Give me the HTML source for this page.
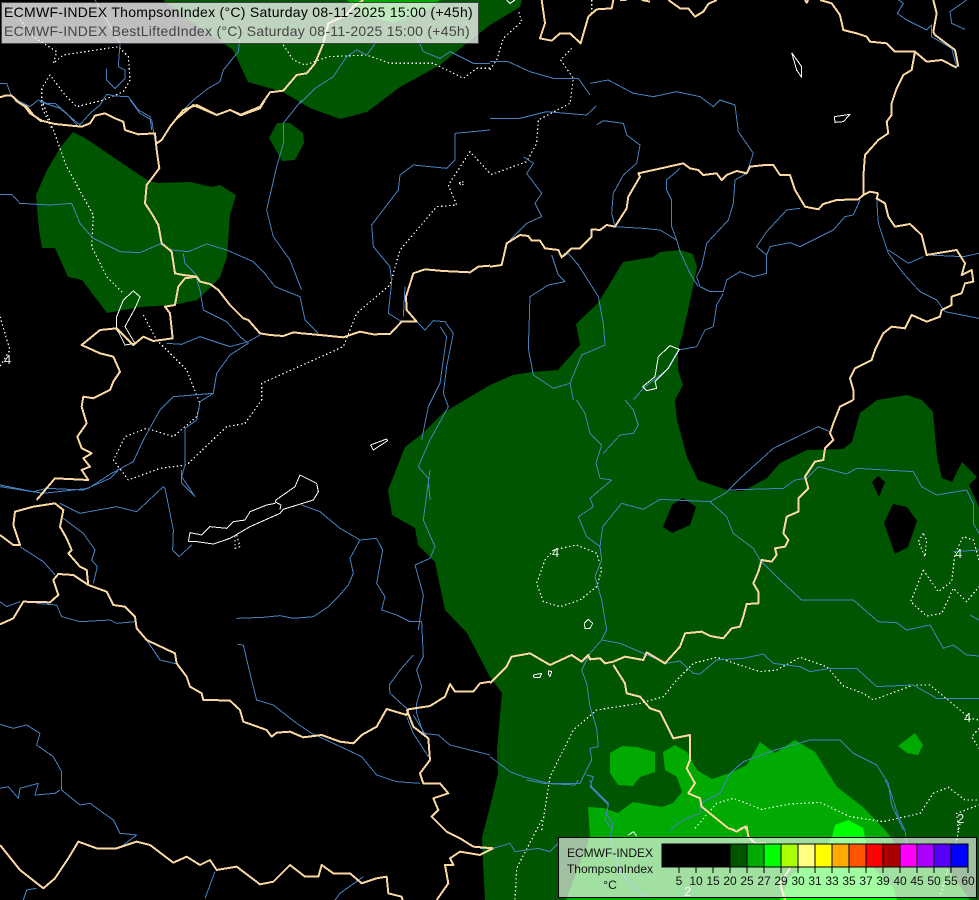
<!DOCTYPE html>
<html><head><meta charset="utf-8"><title>ECMWF-INDEX</title>
<style>
html,body{margin:0;padding:0;background:#000;width:979px;height:900px;overflow:hidden}
body{position:relative;font-family:"Liberation Sans",sans-serif}
svg{position:absolute;left:0;top:0}
polyline,.nss{vector-effect:non-scaling-stroke;fill:none;stroke-linejoin:round;shape-rendering:crispEdges}
.r polyline{stroke:#4682c0;stroke-width:1}
.b polyline{stroke:#fbd8a2;stroke-width:2}
.d polyline{stroke:#fff;stroke-width:1.2;stroke-dasharray:1.5 2.5}
.l polyline{stroke:#fff;stroke-width:1}
.h{position:absolute;left:4px;font-size:14px;letter-spacing:.28px;white-space:nowrap}
.t{position:absolute;white-space:nowrap;font-size:12px;color:#111;transform:translateX(-50%)}
</style></head><body>
<svg width="979" height="900" viewBox="0 0 979 900">
<g fill="#005500">
<polygon points="163,0 193,23 233,50 248,82 283,92 310,108 340,119 367,112 400,87 440,65 467,43 490,25 520,7 522,0"/>
<polygon points="73,132 85,138 113,157 147,180 157,183 190,182 212,187 220,185 236,195 230,215 227,257 220,277 210,288 197,300 173,305 140,307 107,313 82,280 68,277 55,248 42,248 39,230 36,195 47,170 60,148"/>
<polygon points="277,123 290,123 303,133 304,143 295,160 282,161 269,138"/>
<polygon points="680,250 693,254 697,267 693,287 683,333 678,350 678,370 683,385 675,400 677,420 687,457 698,480 730,491 743,491 767,478 780,463 807,450 843,449 852,442 860,413 877,400 907,395 922,400 933,412 937,457 942,478 952,482 962,462 977,477 969,485 979,507 979,900 485,900 483,863 482,837 490,807 498,773 497,750 502,693 490,677 467,633 445,610 435,562 418,545 415,528 392,515 388,490 405,447 423,433 443,413 490,385 513,375 532,372 558,370 580,345 576,324 598,303 623,262 653,257 660,252"/>
</g>
<g fill="#000">
<polygon points="663,527 672,505 683,498 696,507 690,525 672,533"/>
<polygon points="872,482 878,476 885,482 879,497"/>
<polygon points="884,523 893,504 907,507 917,521 908,547 895,554"/>
</g>
<g fill="#00aa00">
<polygon points="347,0 367,17 393,22 423,13 440,0"/>
<polygon points="610,753 622,746 637,747 655,752 655,772 640,777 633,786 618,785 610,773"/>
<polygon points="663,752 675,745 687,752 697,770 712,779 730,773 747,765 760,742 775,753 795,740 815,752 837,787 863,807 885,830 893,840 900,862 947,867 970,900 566,900 590,837 588,807 603,808 618,813 633,802 662,807 673,803 682,792 677,777 665,770"/>
<polygon points="898,746 915,733 923,745 918,755 907,753"/>
</g>
<polygon fill="#00ff00" points="832,837 835,825 848,820 863,828 865,837 870,865 893,887 897,900 780,900 790,877 800,868 813,863"/>

<!-- dotted contours -->
<g class="d">
<g transform="scale(.33333)">
<polyline points="30,20 100,110 170,155 160,190 190,165 355,140 385,170 390,240 370,275 310,300 230,320 195,285 150,225 125,265 125,320 155,385"/>
<polyline points="850,135 880,180 915,195 985,170 1100,165 1170,190 1300,190 1390,235 1430,205 1470,205"/>
</g>
<g transform="translate(0,100) scale(.33333)">
<polyline points="125,0 160,90 200,200 280,345 275,440 320,530 370,580"/>
<polyline points="430,645 470,720 560,810 600,910 590,950 520,1010 440,985 375,1010 340,1080 385,1140 480,1105 560,1095 680,980 735,970 785,900 785,850 1030,740 1070,640 1170,555 1200,450 1310,320 1370,315 1345,255 1410,155 1470,220"/>
<polyline points="1378,250 1385,243 1393,250 1385,257 1378,250"/>
<polyline points="0,650 30,750 0,800"/>
</g>
<g transform="translate(490,0) scale(.33333)">
<polyline points="0,210 20,180 40,115 95,65 85,30"/>
<polyline points="305,0 305,40"/>
<polyline points="245,145 212,180 250,235 240,310 145,360 140,430 110,485 0,525"/>
</g>
<g transform="translate(0,470) scale(.33333)">
<polyline points="710,195 720,230 705,235 705,200 710,195"/>
</g>
<g transform="translate(490,400) scale(.33333)">
<polyline points="190,450 260,435 320,460 335,510 320,560 270,600 210,620 160,605 140,550 165,480 190,450"/>
<polyline points="155,1290 180,1130 250,990 320,930 450,910 520,890 560,840 610,790 680,772 810,815 860,810 930,772 1010,800 1060,858 1120,880 1150,900 1270,855 1320,855 1440,955 1467,960"/>
<polyline points="1467,985 1445,1010 1467,1045"/>
<polyline points="615,1285 680,1210 730,1195 815,1228 900,1212 990,1207 1080,1250 1180,1265 1290,1240 1330,1180 1375,1162 1425,1200 1467,1200"/>
<polyline points="1405,1290 1400,1240 1467,1215"/>
<polyline points="1300,400 1285,425 1305,470 1310,420 1300,400"/>
<polyline points="1300,510 1262,605 1310,648 1355,640 1390,565 1430,605 1467,560"/>
<polyline points="1300,510 1345,575 1385,545 1395,460 1420,410 1450,420 1467,480"/>
</g>
<g transform="translate(480,780) scale(.33333)">
<polyline points="185,120 110,265 105,360"/>
</g>
<g transform="translate(730,780) scale(.33333)">
<polyline points="690,130 680,180 630,350"/>
</g>
</g>

<!-- rivers -->
<g class="r">
<g transform="scale(.33333)">
<polyline points="0,250 20,250 35,290 60,305 90,320 115,300 140,310 165,310 200,340 235,380 270,340 300,315 320,283 345,288 385,290 415,330 450,350 455,390"/>
<polyline points="320,205 320,240 345,265 375,235 375,210 355,200 360,130 285,0"/>
<polyline points="720,100 715,155 670,210 660,245 625,265 580,300 530,350"/>
<polyline points="900,310 945,265 1000,230 1040,170 1070,150 1100,165 1130,125"/>
<polyline points="1250,110 1270,155 1320,175 1350,155 1380,170 1420,190 1470,190"/>
</g>
<g transform="translate(0,100) scale(.33333)">
<polyline points="0,283 35,283 60,310 150,315 215,310 240,370 280,415 360,455 420,458 480,432 515,450 565,455 620,432 680,450 760,485 790,515 825,560 900,590 915,660 955,700"/>
<polyline points="550,460 555,490 585,520 600,570 610,630 680,665 720,710 745,730 690,765 650,820 640,880 600,905 590,960 555,985 555,1095 545,1130 585,1190"/>
<polyline points="640,880 520,890 480,930 430,1020 400,1085 335,1120 265,1165 130,1180 0,1160"/>
<polyline points="780,705 745,725 690,740 600,710 545,733 500,730"/>
<polyline points="905,0 850,70 850,130 830,200 800,330 820,410 870,480 905,570"/>
<polyline points="390,0 420,40 455,60 470,150"/>
<polyline points="120,5 180,25 240,75"/>
<polyline points="1470,90 1365,100 1365,180 1340,205 1240,195 1200,225 1195,270 1115,375 1120,440 1170,500 1175,545 1165,640 1205,665 1250,665 1275,690 1300,662 1335,665 1360,700 1340,800 1330,880 1345,920 1290,1020 1255,1100 1285,1135 1290,1200"/>
<polyline points="1215,560 1210,650"/>
<polyline points="1320,680 1340,710 1320,850 1285,920 1265,1020"/>
</g>
<g transform="translate(490,0) scale(.33333)">
<polyline points="0,185 55,185 120,215 190,235 265,235 300,285"/>
<polyline points="300,250 355,240 430,280 490,290 560,275 630,290 670,320 690,300 735,315 745,395 790,460 770,520 735,540 730,610 715,660 650,730 635,800 620,830 630,860 660,875 700,875 710,840 750,815 790,830 830,820 830,765 800,740 830,695 890,630 930,625"/>
<polyline points="0,355 90,355 170,335 290,345 318,318"/>
<polyline points="320,375 340,362 400,370 410,405 450,435 440,490 400,525 370,580 365,640 375,680 460,685 510,690 560,720 570,755 600,820 625,860"/>
<polyline points="100,470 130,490 110,520 155,580 135,610 155,650 110,670 60,720"/>
<polyline points="570,505 530,540 530,570 545,600 545,680 560,720"/>
<polyline points="830,765 840,740 900,728 930,740 1030,690 1065,650 1090,645 1110,600"/>
<polyline points="1160,595 1165,670 1195,760 1240,820 1290,875 1340,900 1365,935 1467,955"/>
<polyline points="1195,750 1255,790 1300,770"/>
<polyline points="1310,765 1420,770 1467,760"/>
<polyline points="1225,0 1240,10 1222,40 1250,60 1310,90 1325,75 1325,110 1385,145 1400,200"/>
<polyline points="1430,0 1380,35 1385,70 1425,88"/>
<polyline points="185,765 205,825 225,845 175,855 120,890 115,1045 130,1125 190,1165 240,1150 275,1065 345,1035 340,970 325,890 265,795 235,760 215,772"/>
<polyline points="240,1150 250,1200"/>
<polyline points="430,1200 460,1165 530,1110 565,1050 620,1040 645,990 670,980 680,915 700,880"/>
</g>
<g transform="translate(490,400) scale(.33333)">
<polyline points="260,0 285,40 300,100 335,135 318,190 330,235 365,240 300,295 310,320 265,350 290,410 330,440 335,480 315,530 335,600 350,690 335,720 300,760 275,810 290,850 300,920 320,985 325,1040 300,1045 305,1080 270,1150 175,1150 100,1130 60,1115 0,1070"/>
<polyline points="405,0 430,30 445,75 430,100 390,105 340,160"/>
<polyline points="335,720 390,730 530,790 570,783 610,820 630,822 680,780 760,775 820,762 850,790 930,800 960,815 1020,805 1100,805 1160,860 1270,855 1340,895 1467,895"/>
<polyline points="330,440 338,380 395,310 460,328 510,298 660,305 705,280 745,240 850,145 985,80 1020,95"/>
<polyline points="660,305 710,350 730,400 790,445 810,480 870,540 935,600 1090,600 1165,665 1220,668 1250,690 1320,675 1360,745 1390,735 1430,765 1467,768"/>
<polyline points="715,270 880,265 915,240 950,235 985,200 1070,222 1100,205 1270,215 1295,260 1340,285 1430,270 1450,310 1450,370 1467,400"/>
<polyline points="1390,455 1467,450"/>
<polyline points="1440,645 1467,660"/>
<polyline points="855,1050 960,1020 1050,1020 1090,1060 1160,1095 1195,1150 1205,1215 1240,1290"/>
<polyline points="855,1050 800,1070 760,1085 720,1120 690,1180 630,1210 630,1240 580,1260 540,1290"/>
<polyline points="290,1125 310,1130 300,1160 355,1215 345,1260 370,1290"/>
</g>
<g transform="translate(0,470) scale(.33333)">
<polyline points="0,45 100,65 140,55 250,60 330,25 355,0"/>
<polyline points="180,100 240,130 350,110 410,125 490,50 495,55 520,180 518,240 537,260 575,225"/>
<polyline points="545,0 545,40 585,80"/>
<polyline points="905,105 960,125 1020,175 1080,210 1130,205 1148,240 1130,340 1155,380 1145,420 1190,435 1230,455 1265,455 1270,560 1250,600 1265,650 1250,700 1250,730 1270,790 1315,795 1350,825 1470,855"/>
<polyline points="1080,210 1050,265 1060,310 1045,345 1015,380 985,410 940,440 880,445 840,437 790,442 710,445"/>
<polyline points="712,523 730,525 750,610 770,690 820,705 890,760 935,790 1000,820 1085,860 1130,915 1190,935 1260,940"/>
<polyline points="1290,0 1270,150 1305,230 1290,265 1245,285 1270,375 1255,480"/>
<polyline points="1240,555 1200,600 1168,645 1170,670 1225,720"/>
<polyline points="190,145 250,190 285,240 275,270 292,290 280,340"/>
<polyline points="0,395 20,410 60,395"/>
<polyline points="110,400 170,405 185,440 240,455 330,450 350,460 405,455"/>
<polyline points="60,230 130,275 165,315"/>
<polyline points="440,510 480,570 530,582"/>
<polyline points="0,763 40,775 80,765 120,790 110,825 160,860 185,905 185,960 240,1005 270,1000 340,1050 360,1090 410,1095 370,1125"/>
<polyline points="0,955 25,950 55,985 60,955 115,940 105,975 165,970 180,960"/>
<polyline points="645,1205 615,1285"/>
<polyline points="1090,1220 1020,1270 1005,1290"/>
<polyline points="70,1290 80,1260 110,1255"/>
<polyline points="1220,740 1240,790 1285,860"/>
<polyline points="1240,735 1280,800"/>
</g>
<g transform="translate(480,780) scale(.33333)">
<polyline points="140,0 190,10 285,15 295,0"/>
<polyline points="330,0 335,20 385,70 380,105 400,130 390,170 420,270 440,300 480,340 510,350"/>
<polyline points="0,205 40,205 90,190 105,215 175,205 210,215 235,190"/>
</g>
<g transform="translate(730,780) scale(.33333)">
<polyline points="465,0 480,30 505,110 525,150 530,190"/>
</g>
</g>

<!-- lakes -->
<g class="l">
<g transform="translate(0,470) scale(.33333)">
<polyline points="565,215 570,188 605,195 630,170 680,175 700,155 735,150 750,125 800,105 825,100 828,90 885,50 900,15 950,40 955,65 940,90 850,118 840,130 750,170 690,205 640,222 590,215 565,215"/>
<polyline points="825,95 843,105 840,118"/>
</g>
<g transform="translate(0,100) scale(.33333)">
<polyline points="1112,1035 1160,1017 1163,1022 1120,1050 1112,1035"/>
<polyline points="350,690 350,650 370,600 400,573 420,590 405,625 375,680 405,730 375,735 355,695 350,690"/>
</g>
<g transform="translate(490,0) scale(.33333)">
<polyline points="905,158 935,200 935,232 920,210 905,158"/>
<polyline points="1033,350 1080,343 1060,365 1035,367 1033,350"/>
<polyline points="540,1037 568,1048 535,1105 495,1145 500,1165 470,1172 458,1160 495,1130 505,1070 540,1037"/>
<polyline points="50,0 60,10 75,0"/>
</g>
<g transform="translate(490,400) scale(.33333)">
<polyline points="283,670 295,658 308,670 300,685 285,685 283,670"/>
<polyline points="130,825 155,820 150,832 132,832 130,825"/>
<polyline points="175,812 185,815 180,830 175,822 175,812"/>
</g>
<g transform="translate(480,780) scale(.33333)">
<polyline points="445,165 460,155 470,168"/>
</g>
</g>

<!-- borders -->
<g class="b">
<g transform="scale(.33333)">
<polyline points="0,292 15,287 35,287 60,310 80,320 100,345 125,365"/>
<polyline points="525,360 580,315 650,345 690,330 720,345 780,320 810,277 850,272 890,225 920,220 945,190 970,130 985,70 1040,45 1060,20 1090,0"/>
</g>
<g transform="translate(0,100) scale(.33333)">
<polyline points="45,0 75,20 90,40 125,62 165,72 245,80 270,70 285,47 315,40 345,55 370,65 375,90 415,103 465,100 470,150 478,205 440,255 435,310 458,345 475,375 485,430 515,455 525,520 550,525 590,530 600,545 630,552 655,570 690,615 730,655 745,660 780,700 810,705 850,708 880,697 905,700 960,705 1030,712 1080,695 1120,703 1170,702 1205,665 1250,665 1220,630 1218,590 1240,520 1275,508 1330,513 1410,517 1435,500 1470,497"/>
<polyline points="470,130 485,120 510,80 550,30 590,15 650,45 690,30 725,45 780,25 795,0"/>
<polyline points="110,1200 165,1135 265,1140 245,1110 270,1100 250,1075 275,1060 245,1045 232,1010 260,970 245,920 250,890 280,895 330,870 340,845 360,815 340,770 300,760 245,735 300,690 350,685 400,735 430,710 460,723 518,715 510,640 495,620 525,615 535,560 555,535 590,530"/>
</g>
<g transform="translate(490,0) scale(.33333)">
<polyline points="155,0 165,70 150,115 185,122 210,100 240,100 272,130 295,50 320,28 365,25 370,0"/>
<polyline points="390,0 410,0"/>
<polyline points="455,0 480,5"/>
<polyline points="535,0 570,25 595,25 615,50 640,35 655,12 680,0"/>
<polyline points="945,0 950,8 955,0"/>
<polyline points="990,0 1025,10 1050,45 1060,90 1100,100 1130,110 1140,125 1190,130 1215,155 1275,155 1310,185 1355,180 1400,203"/>
<polyline points="1275,155 1265,210 1240,225 1220,265 1205,310 1205,345 1190,365 1195,400 1165,420 1125,465 1120,530 1120,585 1140,575 1165,580"/>
<polyline points="1405,200 1395,150 1355,120 1335,105 1330,95 1340,40 1330,0"/>
<polyline points="0,800 35,795 50,730 90,705 115,708 125,722 150,722 165,745 205,750 215,772 245,745 270,745 305,710 305,688 330,690 350,675 375,680 410,625 415,590 450,530 445,520 500,508 580,490 600,505 625,510 640,525 680,520 695,540 710,525 740,513 770,520 780,500 825,495 850,495 870,525 900,525 915,570 945,620 985,628 1000,612 1040,600 1105,598 1120,585"/>
<polyline points="1165,580 1160,595 1185,610 1195,650 1215,680 1260,672 1295,705 1310,765 1400,750 1425,790 1415,825 1445,810 1450,845 1425,850 1415,880 1385,890 1385,915 1355,930 1350,950 1310,965 1265,945 1245,985 1205,980 1180,1000 1155,1050 1145,1080 1095,1105 1080,1135 1090,1170 1090,1200"/>
</g>
<g transform="translate(490,400) scale(.33333)">
<polyline points="1090,0 1050,20 1030,70 1020,100 1030,120 1005,145 1000,180 975,185 945,230 955,265 925,295 925,335 890,350 880,400 895,420 885,440 855,445 860,465 845,485 815,480 805,515 790,550 805,575 805,610 770,612 760,650 750,680 725,685 700,715 660,708 635,695 585,700 570,740 525,790 470,757 460,780 405,770 370,785 345,790 330,775 300,778 295,765 275,785 245,765 180,795 120,760 65,770 50,800 0,850"/>
<polyline points="370,795 405,850 410,880 450,890 480,925 510,935 550,1015 600,1005 600,1080 590,1105 615,1150 595,1180 630,1195 635,1220 715,1285 735,1290"/>
<polyline points="750,1290 765,1280 770,1290"/>
</g>
<g transform="translate(730,780) scale(.33333)">
<polyline points="0,145 20,155 35,145 50,140 55,170 75,190 110,190"/>
<polyline points="180,265 150,310 165,360"/>
</g>
<g transform="translate(0,470) scale(.33333)">
<polyline points="0,463 40,445 70,395 150,397 175,375 160,330 175,312 220,315 265,345 320,365 340,405 375,410 405,440 410,475 440,510 525,550 530,580 560,620 570,650 605,670 610,690 635,690 690,692 720,720 730,755 800,780 815,800 830,788 870,785 910,802 965,795 1020,815 1060,820 1085,795 1130,770 1160,717 1220,735 1225,718 1290,708 1335,680 1350,642 1365,665 1420,665 1440,640 1470,635"/>
<polyline points="265,345 260,300 240,290 205,250 215,240 200,205 180,170 190,120 165,100 100,110 45,125 40,165 60,225 40,225 0,195"/>
<polyline points="1220,718 1240,770 1285,805 1290,870 1260,910 1270,940 1320,940 1345,970 1300,985 1315,1020 1295,1040 1340,1085 1380,1105 1420,1130 1480,1135"/>
<polyline points="1480,1135 1440,1155 1380,1145 1350,1165 1360,1185 1335,1185 1345,1240 1310,1290"/>
<polyline points="0,1125 60,1200 130,1255 165,1225 205,1165 235,1115 290,1135 350,1135 410,1115 450,1125 520,1178 560,1160 600,1185 630,1170 650,1200 710,1190 780,1243 820,1235 870,1185 915,1220 955,1220 965,1185 1000,1210 1050,1210 1085,1240 1130,1225 1160,1220 1165,1270 1205,1280 1208,1290"/>
</g>
</g>

<!-- contour labels -->
<g font-family="Liberation Sans, sans-serif" font-size="13" fill="#e8f0e8">
<text x="4" y="364">4</text>
<text x="552" y="557">4</text>
<text x="955" y="558">4</text>
<text x="964" y="722">4</text>
<text x="957" y="823">2</text>
<text x="684" y="896">2</text>
</g>
</svg>

<!-- header -->
<div style="position:absolute;left:1px;top:2px;width:476px;height:40px;background:rgba(255,255,255,.75);border:1px solid #444"></div>
<div class="h" style="top:4px;color:#000">ECMWF-INDEX ThompsonIndex (°C) Saturday 08-11-2025 15:00 (+45h)</div>
<div class="h" style="top:23px;color:#444">ECMWF-INDEX BestLiftedIndex (°C) Saturday 08-11-2025 15:00 (+45h)</div>

<!-- legend -->
<div style="position:absolute;left:558px;top:837px;width:417px;height:59px;background:rgba(255,255,255,.63);border:1px solid #000"></div>
<div class="t" style="left:610px;top:846px">ECMWF-INDEX</div>
<div class="t" style="left:610px;top:862px">ThompsonIndex</div>
<div class="t" style="left:610px;top:878px">°C</div>
<svg width="979" height="900" viewBox="0 0 979 900">
<g stroke="#000" stroke-width="1" shape-rendering="crispEdges">
<rect x="662" y="844" width="17" height="23" fill="#000"/>
<rect x="679" y="844" width="17" height="23" fill="#000"/>
<rect x="696" y="844" width="17" height="23" fill="#000"/>
<rect x="713" y="844" width="17" height="23" fill="#000"/>
<rect x="730" y="844" width="17" height="23" fill="#005500"/>
<rect x="747" y="844" width="17" height="23" fill="#00aa00"/>
<rect x="764" y="844" width="17" height="23" fill="#00ff00"/>
<rect x="781" y="844" width="17" height="23" fill="#aaff00"/>
<rect x="798" y="844" width="17" height="23" fill="#ffff80"/>
<rect x="815" y="844" width="17" height="23" fill="#ffff00"/>
<rect x="832" y="844" width="17" height="23" fill="#ffaa00"/>
<rect x="849" y="844" width="17" height="23" fill="#ff5500"/>
<rect x="866" y="844" width="17" height="23" fill="#ff0000"/>
<rect x="883" y="844" width="17" height="23" fill="#aa0000"/>
<rect x="900" y="844" width="17" height="23" fill="#ff00ff"/>
<rect x="917" y="844" width="17" height="23" fill="#aa00ff"/>
<rect x="934" y="844" width="17" height="23" fill="#5500ff"/>
<rect x="951" y="844" width="17" height="23" fill="#0000ff"/>
<path fill="none" d="M679 867v6M696 867v6M713 867v6M730 867v6M747 867v6M764 867v6M781 867v6M798 867v6M815 867v6M832 867v6M849 867v6M866 867v6M883 867v6M900 867v6M917 867v6M934 867v6M951 867v6M968 867v6"/>
</g>
</svg>
<div class="t" style="left:679px;top:874px">5</div>
<div class="t" style="left:696px;top:874px">10</div>
<div class="t" style="left:713px;top:874px">15</div>
<div class="t" style="left:730px;top:874px">20</div>
<div class="t" style="left:747px;top:874px">25</div>
<div class="t" style="left:764px;top:874px">27</div>
<div class="t" style="left:781px;top:874px">29</div>
<div class="t" style="left:798px;top:874px">30</div>
<div class="t" style="left:815px;top:874px">31</div>
<div class="t" style="left:832px;top:874px">33</div>
<div class="t" style="left:849px;top:874px">35</div>
<div class="t" style="left:866px;top:874px">37</div>
<div class="t" style="left:883px;top:874px">39</div>
<div class="t" style="left:900px;top:874px">40</div>
<div class="t" style="left:917px;top:874px">45</div>
<div class="t" style="left:934px;top:874px">50</div>
<div class="t" style="left:951px;top:874px">55</div>
<div class="t" style="left:968px;top:874px">60</div>
</body></html>
